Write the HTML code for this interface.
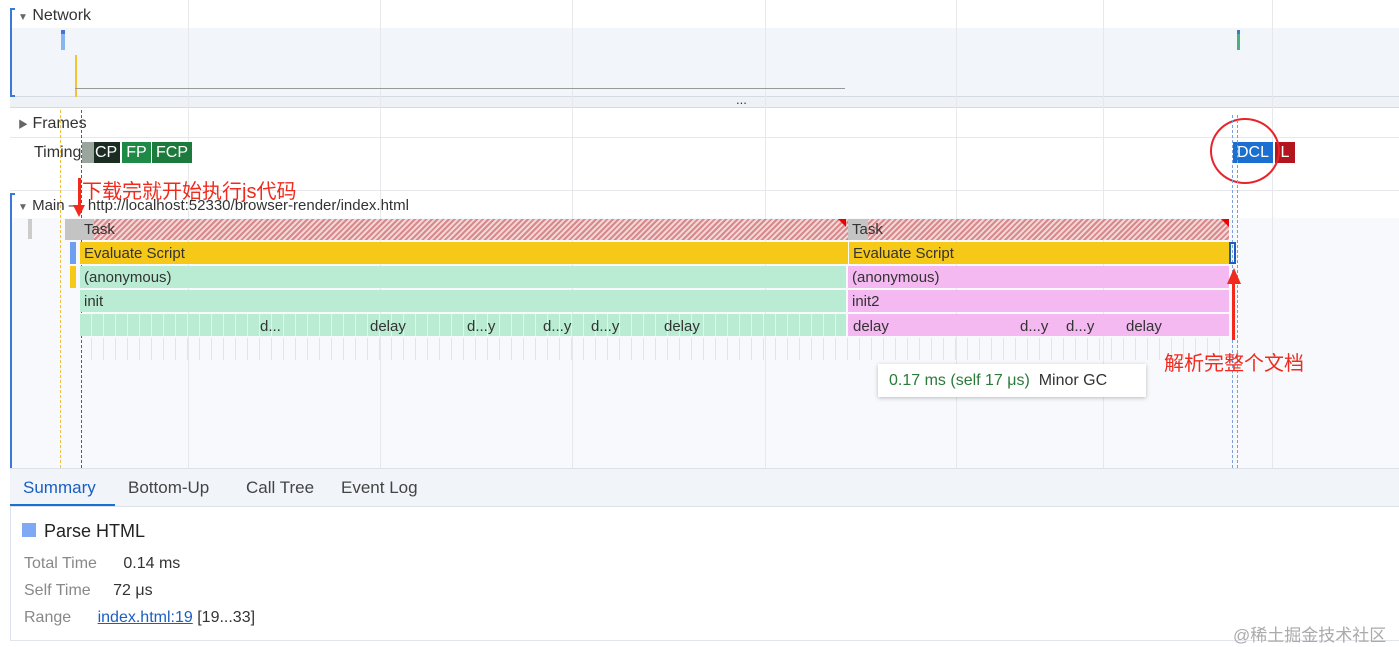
<!DOCTYPE html>
<html><head><meta charset="utf-8"><style>
*{margin:0;padding:0;box-sizing:border-box}
body{width:1399px;height:647px;overflow:hidden;background:#fff;position:relative;font-family:"Liberation Sans","Noto Sans CJK SC",sans-serif;color:#333}
.a{position:absolute}
.t{font-size:15px;white-space:nowrap}
.grid{position:absolute;top:0;width:1px;height:468px;background:#e6e8ec}
.bar{position:absolute;height:22px;font-size:15px;line-height:24px;padding-left:4px;white-space:nowrap;overflow:hidden;color:#333}
.red{color:#f02b1e;font-size:20px;white-space:nowrap}
</style></head><body>
<div class="a" style="left:10px;top:28px;width:1389px;height:68px;background:#f2f6fb"></div>
<div class="a" style="left:10px;top:96px;width:1389px;height:12px;background:#eef1f6;border-top:1px solid #d6dbe3;border-bottom:1px solid #d6dbe3"></div>
<div class="a t" style="left:736px;top:92px;font-size:13px;color:#333">...</div>
<div class="a" style="left:10px;top:218px;width:1389px;height:250px;background:#f7f9fd"></div>
<div class="grid" style="left:188px"></div><div class="grid" style="left:380px"></div><div class="grid" style="left:572px"></div><div class="grid" style="left:765px"></div><div class="grid" style="left:956px"></div><div class="grid" style="left:1103px"></div><div class="grid" style="left:1272px"></div>
<div class="a" style="left:10px;top:8px;width:5px;height:89px;border:2px solid #3b78d8;border-right:none"></div>
<div class="a" style="left:10px;top:193px;width:5px;height:275px;border:2px solid #3b78d8;border-right:none;border-bottom:none"></div>
<div class="a t" style="left:18px;top:7px;font-size:16px"><span style="font-size:10px;color:#666">▼</span> Network</div>
<div class="a" style="left:61px;top:30px;width:4px;height:20px;background:#8ab4f0"></div>
<div class="a" style="left:61px;top:30px;width:4px;height:4px;background:#3b78d8"></div>
<div class="a" style="left:75px;top:55px;width:2px;height:42px;background:#f4c430"></div>
<div class="a" style="left:75px;top:88px;width:770px;height:1px;background:#999"></div>
<div class="a" style="left:1237px;top:30px;width:3px;height:20px;background:#4caf80"></div>
<div class="a" style="left:1237px;top:30px;width:3px;height:4px;background:#3b78d8"></div>
<div class="a" style="left:10px;top:137px;width:1389px;height:1px;background:#e6e8ec"></div>
<div class="a" style="left:10px;top:190px;width:1389px;height:1px;background:#e6e8ec"></div>
<div class="a t" style="left:18px;top:115px;font-size:16px"><span style="font-size:10px;color:#666">▶</span> Frames</div>
<div class="a t" style="left:34px;top:144px;font-size:16px">Timings</div>
<div class="a t" style="left:82px;top:142px;height:21px;width:38px;background:#1b2d22;color:#fff;line-height:22px;padding-left:13px;font-size:16px">CP</div>
<div class="a" style="left:82px;top:142px;width:12px;height:21px;background:#9aa69d"></div>
<div class="a t" style="left:122px;top:142px;height:21px;width:29px;background:#1f8a45;color:#fff;line-height:22px;text-align:center;font-size:16px">FP</div>
<div class="a t" style="left:152px;top:142px;height:21px;width:40px;background:#1c7a3c;color:#fff;line-height:22px;text-align:center;font-size:16px">FCP</div>
<div class="a t" style="left:1233px;top:142px;height:21px;width:40px;background:#1a6fd0;color:#fff;line-height:22px;text-align:center;font-size:16px">DCL</div>
<div class="a t" style="left:1275px;top:142px;height:21px;width:20px;background:#b3151f;color:#fff;line-height:22px;text-align:center;font-size:16px">L</div>
<div class="a" style="left:1210px;top:118px;width:70px;height:66px;border:2px solid #e8232a;border-radius:50%"></div>
<div class="a" style="left:60px;top:110px;width:0;height:358px;border-left:1px dashed #f0c040"></div>
<div class="a" style="left:81px;top:110px;width:0;height:358px;border-left:1px dashed #2a7a50"></div>
<div class="a" style="left:1232px;top:115px;width:0;height:353px;border-left:1px dashed #7aa0e0"></div>
<div class="a" style="left:1237px;top:115px;width:0;height:353px;border-left:1px dashed #d08080"></div>
<div class="a t" style="left:18px;top:197px"><span style="font-size:10px;color:#666">▼</span> Main — http://localhost:52330/browser-render/index.html</div>
<div class="red a" style="left:82px;top:175px">下载完就开始执行js代码</div>
<div class="a" style="left:78px;top:178px;width:3px;height:30px;background:#f02b1e"></div>
<div class="a" style="left:73px;top:205px;width:0;height:0;border-left:6px solid transparent;border-right:6px solid transparent;border-top:12px solid #f02b1e"></div>
<div class="a" style="left:28px;top:219px;width:4px;height:20px;background:#ccc"></div>
<div class="a" style="left:65px;top:219px;width:15px;height:21px;background:#c4c4c4"></div>
<div class="bar" style="left:80px;top:219px;width:1149px;height:21px;background:repeating-linear-gradient(135deg,#d8898b 0 2px,#f3d6d6 2px 4px)"></div>
<div class="a" style="left:80px;top:219px;width:14px;height:21px;background:#c4c4c4"></div>
<div class="a" style="left:848px;top:219px;width:20px;height:21px;background:#c4c4c4"></div>
<div class="a t" style="left:84px;top:221px">Task</div>
<div class="a t" style="left:852px;top:221px">Task</div>
<div class="a" style="left:838px;top:219px;width:0;height:0;border-left:8px solid transparent;border-top:8px solid #e00"></div>
<div class="a" style="left:1221px;top:219px;width:0;height:0;border-left:8px solid transparent;border-top:8px solid #e00"></div>
<div class="a" style="left:70px;top:242px;width:6px;height:22px;background:#6e9ef0"></div>
<div class="bar" style="left:80px;top:242px;width:1149px;background:#f6c818">Evaluate Script</div>
<div class="bar" style="left:848px;top:242px;width:381px;background:#f6c818;border-left:1px solid #fff">Evaluate Script</div>
<div class="a" style="left:1229px;top:242px;width:7px;height:22px;border:2px solid #1a5fc0"></div>
<div class="a" style="left:70px;top:266px;width:6px;height:22px;background:#f6c818"></div>
<div class="bar" style="left:80px;top:266px;width:766px;background:#b9ecd3">(anonymous)</div>
<div class="bar" style="left:848px;top:266px;width:381px;background:#f3b9f0">(anonymous)</div>
<div class="bar" style="left:80px;top:290px;width:766px;background:#b9ecd3">init</div>
<div class="bar" style="left:848px;top:290px;width:381px;background:#f3b9f0">init2</div>
<div class="bar" style="left:80px;top:314px;width:766px;background:repeating-linear-gradient(90deg,#b9ecd3 0 11px,#e0f6ec 11px 12px)"></div>
<div class="bar" style="left:848px;top:314px;width:381px;background:#f3b9f0"></div>
<div class="a t" style="left:260px;top:318px">d...</div>
<div class="a t" style="left:370px;top:318px">delay</div>
<div class="a t" style="left:467px;top:318px">d...y</div>
<div class="a t" style="left:543px;top:318px">d...y</div>
<div class="a t" style="left:591px;top:318px">d...y</div>
<div class="a t" style="left:664px;top:318px">delay</div>
<div class="a t" style="left:853px;top:318px">delay</div>
<div class="a t" style="left:1020px;top:318px">d...y</div>
<div class="a t" style="left:1066px;top:318px">d...y</div>
<div class="a t" style="left:1126px;top:318px">delay</div>
<div class="a" style="left:80px;top:338px;width:1149px;height:22px;background:repeating-linear-gradient(90deg,transparent 0 11px,#e2e4e8 11px 12px)"></div>
<div class="a" style="left:1232px;top:280px;width:3px;height:60px;background:#f02b1e"></div>
<div class="a" style="left:1227px;top:268px;width:0;height:0;border-left:7px solid transparent;border-right:7px solid transparent;border-bottom:16px solid #f02b1e"></div>
<div class="red a" style="left:1164px;top:347px">解析完整个文档</div>
<div class="a t" style="left:878px;top:364px;width:268px;height:33px;background:#fff;box-shadow:0 1px 4px rgba(0,0,0,.25);line-height:33px;padding-left:11px;font-size:16px"><span style="color:#2a7a3a">0.17 ms (self 17 μs)</span>&nbsp; Minor GC</div>
<div class="a" style="left:10px;top:468px;width:1389px;height:39px;background:#f1f4f9;border-top:1px solid #dde2ea;border-bottom:1px solid #dde2ea"></div>
<div class="a" style="left:10px;top:504px;width:105px;height:2px;background:#1a6fd0"></div>
<div class="a t" style="left:23px;top:478px;font-size:17px;color:#1a5fc0">Summary</div>
<div class="a t" style="left:128px;top:478px;font-size:17px;color:#444">Bottom-Up</div>
<div class="a t" style="left:246px;top:478px;font-size:17px;color:#444">Call Tree</div>
<div class="a t" style="left:341px;top:478px;font-size:17px;color:#444">Event Log</div>
<div class="a" style="left:10px;top:507px;width:1px;height:133px;background:#dde2ea"></div>
<div class="a" style="left:22px;top:523px;width:14px;height:14px;background:#7fa8f5"></div>
<div class="a t" style="left:44px;top:521px;font-size:18px;color:#222">Parse HTML</div>
<div class="a t" style="left:24px;top:555px;font-size:16px;color:#888">Total Time <span style="color:#333;margin-left:22px">0.14 ms</span></div>
<div class="a t" style="left:24px;top:582px;font-size:16px;color:#888">Self Time <span style="color:#333;margin-left:18px">72 μs</span></div>
<div class="a t" style="left:24px;top:609px;font-size:16px;color:#888">Range <span style="color:#1a5fc0;text-decoration:underline;margin-left:22px">index.html:19</span> <span style="color:#333">[19...33]</span></div>
<div class="a" style="left:10px;top:640px;width:1389px;height:1px;background:#e2e5ea"></div>
<div class="a t" style="left:1233px;top:621px;font-size:17px;color:#aaa">@稀土掘金技术社区</div>
</body></html>
